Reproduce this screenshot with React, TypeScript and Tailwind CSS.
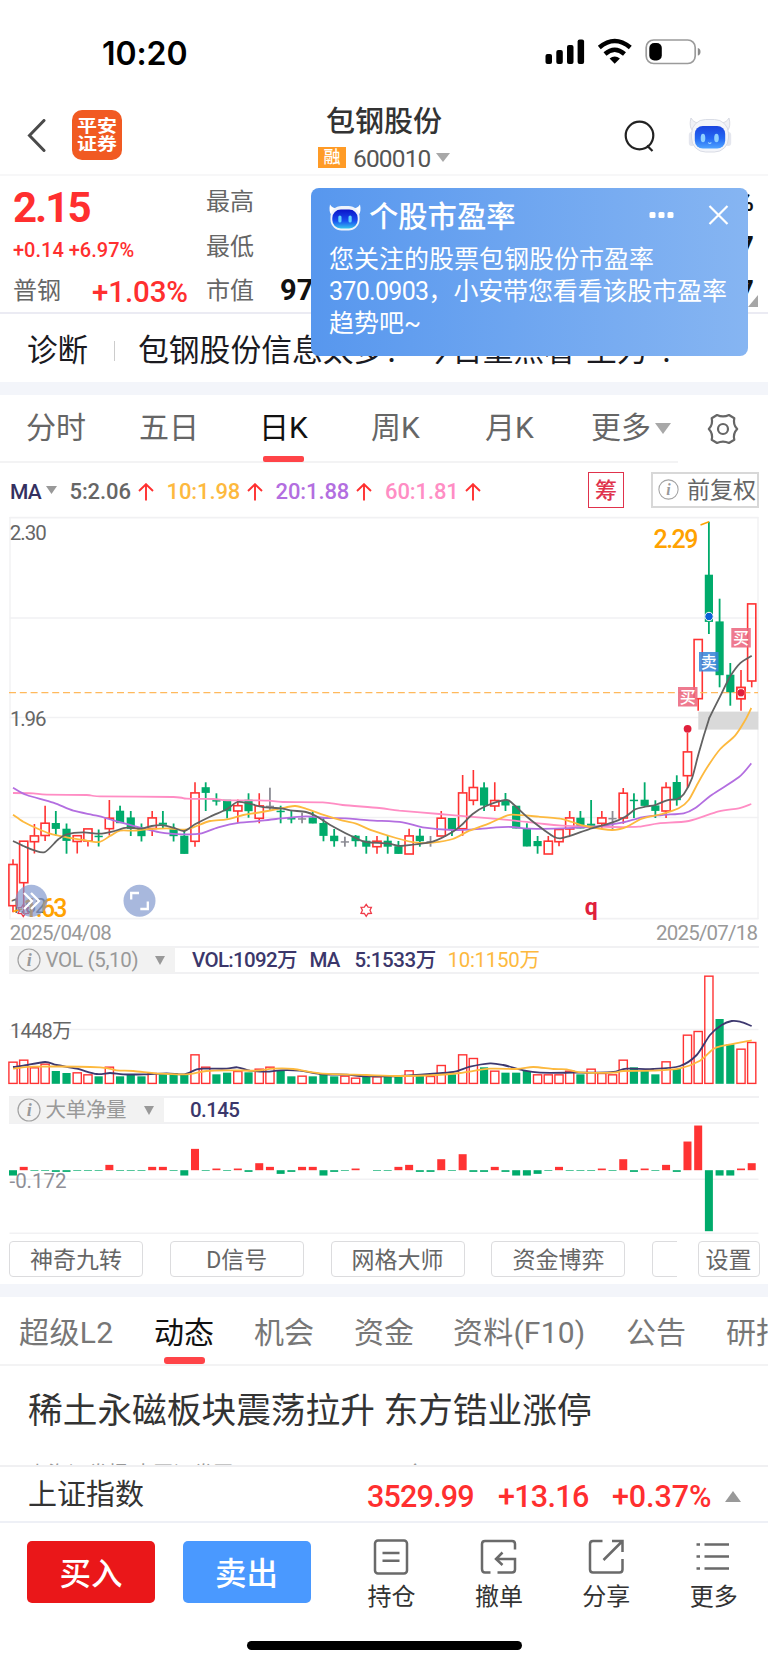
import React from "react";

type Kind = "R" | "G" | "D";
type Candle = [Kind, number, number, number, number];
type Pt = [number, number];

const X0 = 13;
const STEP = 10.706;
const cx = (i: number) => X0 + i * STEP;

const RED = "#ff3333";
const GREEN = "#00ab6b";
const GRID = "#f1f1f3";

// kind, high, body top, body bottom, low
const candles: Candle[] = [
  ["R", 859.3, 864.3, 905.7, 912.3], ["R", 841, 841, 882.7, 914], ["R", 824, 835.7, 841.7, 853.5], ["R", 805.7, 823, 835.5, 841],
  ["G", 811, 823.3, 828.7, 836], ["G", 823.5, 829, 840.7, 853.7], ["R", 835.5, 835.5, 841.5, 853.5], ["R", 828.7, 828.7, 841, 846.5],
  ["G", 829.5, 836, 837, 846.5], ["R", 800, 818, 828.7, 835.5], ["G", 805.7, 811, 823, 823], ["G", 811, 817.7, 828.7, 836],
  ["G", 823.5, 828, 836, 841.5], ["R", 811, 817.7, 828.5, 836], ["G", 811, 823, 824.6, 829], ["G", 823.5, 829.5, 836, 841.5],
  ["G", 829.5, 836, 853.7, 853.7], ["R", 782.3, 792.7, 841.3, 846.7], ["G", 782.3, 787.5, 792.7, 811], ["G", 793.3, 800.4, 801.4, 805.5],
  ["G", 800, 800, 811, 818.3], ["R", 799.5, 805.5, 811, 823], ["G", 793.3, 800, 811, 817.7], ["R", 793.3, 805.7, 818.3, 823.3],
  ["D", 787.7, 806, 807, 810.7], ["G", 805.7, 811, 812, 823.3], ["G", 810.7, 818, 819.3, 823.3], ["D", 812.7, 818.5, 819.5, 823.3],
  ["G", 811, 817.7, 823.3, 823.3], ["G", 818, 823.3, 835.7, 841.3], ["G", 829, 836, 841, 846.7], ["D", 836.7, 841.5, 842.5, 846.7],
  ["G", 835, 836, 841, 846.7], ["G", 836, 841, 846.5, 853.7], ["R", 836, 841, 846.7, 853.7], ["G", 836, 841, 846.5, 853.7],
  ["G", 841, 846.5, 853.7, 853.7], ["R", 828.7, 835.7, 854, 854], ["G", 828.7, 836, 841, 846.7], ["D", 836, 841.5, 842.5, 846.7],
  ["R", 811, 818, 836, 836], ["G", 818.3, 818.3, 829, 836], ["R", 775, 792.7, 828.7, 835.7], ["R", 770, 787.3, 800.3, 805.3],
  ["G", 782.3, 787.7, 805.3, 811], ["R", 782.3, 800.3, 806, 811], ["G", 793, 800.3, 805.3, 811], ["G", 806, 806, 828.3, 828.3],
  ["G", 823.3, 828.3, 846.3, 846.3], ["G", 836, 841.3, 846, 853.7], ["R", 836, 841, 854, 854], ["R", 828.3, 829.3, 841.7, 846.3],
  ["R", 811, 817.7, 829, 836], ["G", 811, 818, 828.3, 828.3], ["G", 800, 824, 825.7, 828.3], ["R", 811, 817.7, 823.3, 828.3],
  ["D", 811, 818.2, 819.2, 829], ["R", 788, 793, 818, 823.7], ["G", 793.3, 800, 801, 818], ["G", 782.3, 800, 805.7, 805.7],
  ["G", 800.3, 805.7, 810.7, 818], ["R", 782.3, 787.3, 811, 818], ["G", 775.3, 782.3, 800, 805.7], ["R", 733, 751.7, 775.7, 788],
  ["R", 639.3, 639.3, 698.7, 710.7], ["G", 521.7, 575, 621.7, 634], ["G", 598.7, 621.7, 675, 687.3], ["G", 663, 675, 692.3, 705.7],
  ["R", 670, 687.3, 698.7, 710.7], ["R", 603.7, 603.7, 681, 687.3],
];

// Panels of sampled points share a scale of 3 with their own origin.
const at = (ox: number, oy: number, pts: Pt[]): Pt[] => pts.map(([x, y]) => [ox + x / 3, oy + y / 3]);

const ma5: Pt[] = [
  ...at(0, 740, [[39, 303], [70, 318], [103, 331], [135, 336], [175, 298], [200, 283], [250, 277], [298, 281], [340, 274], [380, 263], [425, 266], [455, 258], [490, 256], [520, 263], [553, 273], [585, 253], [630, 230], [680, 208], [712, 186], [745, 190]]),
  ...at(256, 740, [[10, 199], [42, 203], [75, 205], [103, 211], [150, 216], [180, 228], [235, 262], [300, 295], [331, 306], [395, 310], [432, 318], [470, 314], [530, 305], [588, 277], [620, 252], [650, 222], [690, 198], [748, 180]]),
  ...at(512, 700, [[0, 309], [50, 355], [100, 393], [125, 410], [145, 415], [170, 409], [230, 388], [300, 368], [340, 350], [370, 328], [400, 320], [430, 315], [465, 301], [495, 297], [515, 283], [540, 235], [560, 160], [590, 60]]),
  ...at(620, 510, [[270, 620], [300, 560], [330, 500], [360, 460], [395, 437]]),
];
const ma10: Pt[] = [
  ...at(0, 740, [[39, 224], [70, 245], [110, 265], [150, 281], [200, 292], [250, 300], [298, 306], [330, 288], [360, 272], [400, 272], [440, 268], [500, 265], [553, 269], [580, 262], [630, 243], [680, 238], [730, 225]]),
  ...at(256, 740, [[0, 219], [50, 210], [90, 202], [118, 198], [150, 206], [200, 224], [260, 242], [300, 251], [350, 272], [420, 294], [480, 308], [530, 308], [590, 297], [640, 272], [700, 250], [740, 232]]),
  ...at(512, 700, [[0, 344], [80, 350], [145, 356], [180, 366], [220, 378], [300, 390], [345, 380], [390, 356], [450, 342], [500, 325], [530, 300], [560, 245], [590, 195], [625, 147], [670, 106], [700, 60], [718, 24]]),
];
const ma20: Pt[] = [
  ...at(0, 740, [[39, 143], [80, 165], [160, 188], [220, 212], [290, 227], [340, 241], [420, 263], [480, 277], [550, 283], [600, 281], [655, 262], [720, 248]]),
  ...at(256, 740, [[0, 244], [60, 237], [150, 229], [210, 234], [270, 235], [340, 241], [440, 247], [500, 262], [590, 270], [680, 266], [720, 262]]),
  ...at(512, 700, [[0, 381], [50, 386], [150, 385], [250, 380], [330, 368], [390, 352], [450, 345], [515, 340], [550, 324], [600, 284], [680, 232], [718, 190]]),
];
const ma60: Pt[] = [
  ...at(0, 740, [[39, 159], [100, 160], [140, 164], [260, 165], [300, 169], [520, 171], [560, 176], [640, 177], [680, 181]]),
  ...at(256, 740, [[0, 181], [40, 182], [80, 186], [200, 187], [260, 195], [370, 204], [430, 212], [550, 222], [640, 230]]),
  ...at(512, 700, [[0, 361], [80, 370], [150, 377], [300, 381], [380, 380], [440, 370], [530, 363], [620, 334], [680, 325], [718, 312]]),
];

const volume =
  "R365 R359 R382 R371 G393 G399 R397 R403 G409 R380 G409 G403 G409 R399 G403 G399 G403 R343 R380 G403 G398 R393 G397 R386 R380 G393 G409 R407 G409 G403 G409 R407 R413 G409 R409 G409 G409 R391 G403 R408 R375 G403 R343 R354 G382 R392 G398 G398 G393 R403 R403 R403 R392 G403 R386 R399 R403 R359 G382 G393 G403 R364 G387 R284 R273 R107 G237 G313 R326 R306".split(" ");

const volMa5: Pt[] = [
  ...at(0, 940, [[39, 381], [70, 377], [135, 366], [170, 375], [230, 386], [290, 402], [330, 399], [370, 403], [430, 403], [500, 400], [553, 403], [590, 388], [620, 386], [680, 386], [712, 382], [750, 392], [800, 395], [840, 391], [900, 392], [960, 402], [1040, 404], [1080, 408], [1140, 409]]),
  ...at(380, 940, [[60, 408], [150, 402], [220, 396], [270, 380], [330, 370], [370, 375], [430, 391], [480, 398], [580, 398], [640, 398], [700, 396], [740, 386], [820, 387], [900, 378], [950, 345], [990, 285], [1025, 255], [1055, 243], [1080, 245], [1115, 258]]),
];
const volMa10: Pt[] = [
  ...at(0, 940, [[39, 386], [100, 380], [300, 382], [350, 391], [400, 393], [480, 401], [560, 403], [620, 393], [700, 391], [770, 392], [820, 386], [880, 387], [960, 400], [1100, 405]]),
  ...at(380, 940, [[60, 408], [170, 405], [240, 399], [330, 386], [410, 387], [460, 381], [520, 387], [560, 388], [600, 397], [700, 398], [730, 393], [820, 392], [900, 385], [960, 362], [1000, 327], [1030, 317], [1115, 301]]),
];

const net = [
  -16, 10, -2, -2, -5, -5, -2, -2, -2, 16, -2, -2, -2, 10, 10, -2, -16, 64, -2, 5, -2, 5, -5, 21, 10, -11, -5, 10, 10, -16, -5, -2, 5, 0, -2, -2, 10, 16, -5, -5, 33, -2, 48, -5, -5, 10, -5, -16, -16, -11, -2, 10, -2, -2, -2, 5, -2, 33, -5, 5, -2, 16, -5, 86, 134, -183, -16, -16, 5, 21,
];

function smooth(p: Pt[]) {
  let d = `M${p[0][0].toFixed(1)} ${p[0][1].toFixed(1)}`;
  for (let i = 0; i < p.length - 1; i++) {
    const a = p[Math.max(0, i - 1)];
    const b = p[i];
    const c = p[i + 1];
    const e = p[Math.min(p.length - 1, i + 2)];
    const k = 7;
    d += `C${[b[0] + (c[0] - a[0]) / k, b[1] + (c[1] - a[1]) / k, c[0] - (e[0] - b[0]) / k, c[1] - (e[1] - b[1]) / k, c[0], c[1]].map((n) => n.toFixed(1)).join(" ")}`;
  }
  return d;
}

const Line = ({ pts, color }: { pts: Pt[]; color: string }) => (
  <path d={smooth(pts)} fill="none" stroke={color} strokeWidth="1.8" strokeLinejoin="round" />
);

const Grid = ({ ys }: { ys: number[] }) => (
  <>
    {ys.map((y) => (
      <path key={y} d={`M9.5 ${y}H758.5`} stroke={GRID} strokeWidth="1.6" />
    ))}
  </>
);

const Star = ({ x, y }: { x: number; y: number }) => (
  <path
    transform={`translate(${x} ${y})`}
    d="M0 -6L1.9 -3.2L5.2 -3L3.8 0L5.2 3L1.9 3.2L0 6L-1.9 3.2L-5.2 3L-3.8 0L-5.2 -3L-1.9 -3.2Z"
    fill="none"
    stroke="#f03a48"
    strokeWidth="1.3"
  />
);

const Tag = ({ x, y, color, label }: { x: number; y: number; color: string; label: string }) => (
  <g>
    <rect x={x} y={y} width="19.5" height="19.5" fill={color} fillOpacity="0.88" />
    <text x={x + 9.75} y={y + 15.6} fontSize="16" fontWeight="500" textAnchor="middle" fill="#fff">
      {label}
    </text>
  </g>
);

function PriceChart() {
  return (
    <svg className="block shrink-0" width="768" height="431" viewBox="0 515 768 431">
      <Grid ys={[517.6, 618, 717.5, 817.5, 918.6]} />
      <path d="M10 517V919M758 517V919" stroke={GRID} strokeWidth="1.4" />
      <text x="9.8" y="539.7" fontSize="20.5" fill="#666" textLength="37">2.30</text>
      <text x="10" y="726" fontSize="20.5" fill="#666" textLength="36.5">1.96</text>
      <text x="10" y="912.5" fontSize="20.5" fill="#666" textLength="36.5">1.62</text>
      <rect x="698.3" y="711.6" width="60" height="18" fill="#d9d9d9" />
      {candles.map(([k, h, t, b, l], i) => {
        const x = cx(i);
        if (k === "R")
          return (
            <g key={i} stroke={RED} strokeWidth="1.6" fill="none">
              <path d={`M${x} ${h}V${t}M${x} ${b}V${l}`} />
              <rect x={x - 4.1} y={t + 0.2} width="8.2" height={Math.max(1, b - t - 0.2)} />
            </g>
          );
        const c = k === "G" ? GREEN : "#8c8c94";
        return (
          <g key={i} fill={c}>
            <rect x={x - 0.9} y={h} width="1.8" height={l - h} />
            <rect x={x - 4.1} y={t - 0.3} width="8.2" height={b - t + 0.5} />
          </g>
        );
      })}
      <path d="M9 692.6H758" stroke="#ffb95c" strokeWidth="1.3" strokeDasharray="7 3.8" />
      <Line pts={ma60} color="#ff8dc4" />
      <Line pts={ma20} color="#b36ee0" />
      <Line pts={ma10} color="#fdb93e" />
      <Line pts={ma5} color="#626262" />
      <Tag x={678} y={687} color="#ec6880" label="买" />
      <Tag x={699} y={652} color="#3b86da" label="卖" />
      <Tag x={731.3} y={628} color="#ec6880" label="买" />
      <circle cx="709" cy="616.5" r="4.2" fill="#0a62d6" stroke="#fff" strokeWidth="1" />
      <circle cx="741" cy="692.8" r="4.2" fill="#e0203c" stroke="#fff" strokeWidth="1" />
      <rect x="736.8" y="687.5" width="8.2" height="11.2" fill="none" stroke={RED} strokeWidth="1.4" />
      <circle cx="687.6" cy="728.8" r="3.9" fill="#e0203c" />
      <path d="M700.5 525L709 521.8" stroke="#ffa200" strokeWidth="1.5" />
      <text x="653.5" y="548" fontSize="25" fontWeight="500" fill="#ffa200" textLength="45">2.29</text>
      <path d="M13 911.5L22 909" stroke="#ffa200" strokeWidth="1.5" />
      <text x="23.5" y="917.2" fontSize="25" fontWeight="500" fill="#ffa200" textLength="44">1.63</text>
      <Star x={23.3} y={910.5} />
      <Star x={366.2} y={910.3} />
      <text x="584.8" y="914.5" fontSize="23" fontWeight="700" fill="#e0203c">q</text>
      <g fill="#7b93cc" fillOpacity="0.66">
        <circle cx="31.3" cy="900.8" r="16" />
        <circle cx="139.5" cy="900.8" r="16" />
      </g>
      <g fill="none" stroke="#fff" strokeWidth="2.3">
        <path d="M24 893L32 901L24 909M31 893L39 901L31 909" />
        <path d="M131.2 899.5V893H139M140.3 909H147.8V901.5" />
      </g>
      <text x="9.8" y="940.4" fontSize="20.5" fill="#999" textLength="102">2025/04/08</text>
      <text x="656" y="940.4" fontSize="20.5" fill="#999" textLength="102">2025/07/18</text>
    </svg>
  );
}

function VolumeChart() {
  return (
    <svg className="block shrink-0" width="768" height="122" viewBox="0 974 768 122">
      <Grid ys={[1029.5]} />
      {volume.map((v, i) => {
        const x = cx(i);
        const y = 940 + Number(v.slice(1)) / 3;
        return v[0] === "R" ? (
          <rect key={i} x={x - 4.1} y={y + 0.5} width="8.2" height={1082.9 - y} fill="none" stroke={RED} strokeWidth="1.4" />
        ) : (
          <rect key={i} x={x - 4.1} y={y} width="8.2" height={1083.8 - y} fill={GREEN} />
        );
      })}
      <Line pts={volMa5} color="#3d386f" />
      <Line pts={volMa10} color="#fdb93e" />
      <text x="10" y="1038" fontSize="20" fill="#666" textLength="62">1448万</text>
    </svg>
  );
}

function NetChart() {
  return (
    <svg className="block shrink-0" width="768" height="110" viewBox="0 1124 768 110">
      <Grid ys={[1179.3, 1233.4]} />
      {net.map((v, i) => {
        const h = Math.abs(v) / 3;
        if (!h) return null;
        return <rect key={i} x={cx(i) - 4} y={v > 0 ? 1170.2 - h : 1170.2} width="8" height={h} fill={v > 0 ? RED : GREEN} />;
      })}
      <text x="9.500" y="1188" fontSize="20.5" fill="#8e8e96" textLength="57">-0.172</text>
    </svg>
  );
}

const Tri = ({ className, up }: { className: string; up?: boolean }) => (
  <svg className={`shrink-0 ${className}`} viewBox="0 0 10 10" preserveAspectRatio="none" fill="currentColor">
    <path d={up ? "M0 10H10L5 0Z" : "M0 0H10L5 10Z"} />
  </svg>
);

const Arrow = () => (
  <svg className="mt-[4px] shrink-0" width="16" height="18" viewBox="0 0 16 18" fill="none" stroke="#ff3030" strokeWidth="1.9">
    <path d="M8 17.5V1.5M1 8L8 1.2L15 8" />
  </svg>
);

const Info = ({ className }: { className: string }) => (
  <svg className={`shrink-0 ${className}`} viewBox="0 0 24 24">
    <circle cx="12" cy="12" r="11" fill="none" stroke="#a3a3a3" strokeWidth="1.2" />
    <text x="12" y="18" textAnchor="middle" fontSize="18" fontStyle="italic" fontWeight="700" fill="#999" fontFamily="Liberation Serif, serif">i</text>
  </svg>
);

const Robot = ({ className }: { className: string }) => (
  <svg className={`shrink-0 ${className}`} viewBox="0 0 44 36">
    <defs>
      <linearGradient id="robotHead" x1="0" y1="0" x2="0" y2="1">
        <stop offset="0" stopColor="#1b45e0" />
        <stop offset="0.55" stopColor="#2468f2" />
        <stop offset="1" stopColor="#4fa3ff" />
      </linearGradient>
    </defs>
    <rect x="0.8" y="15" width="6" height="14" rx="3" fill="#e4e6ee" />
    <rect x="37.2" y="15" width="6" height="14" rx="3" fill="#e4e6ee" />
    <path d="M3 1C1.6 6 2 11 4.5 13.5L10 6C7 5.5 4.5 3.8 3 1ZM41 1C42.4 6 42 11 39.5 13.5L34 6C37 5.5 39.5 3.8 41 1Z" fill="#eff0f5" stroke="#cfd2dc" strokeWidth="0.8" />
    <rect x="3.5" y="2.5" width="37" height="32.5" rx="14" fill="#f4f5f9" stroke="#d5d8e2" strokeWidth="0.9" />
    <rect x="6.8" y="9" width="30.4" height="22.5" rx="8" fill="url(#robotHead)" />
    <ellipse cx="15" cy="21" rx="2.3" ry="4.3" fill="#8fd0ff" />
    <ellipse cx="28.5" cy="21" rx="2.3" ry="4.3" fill="#8fd0ff" />
    <path d="M20.3 25.5Q21.8 27.5 23.3 25.5" fill="none" stroke="#a8dcff" strokeWidth="1.2" />
  </svg>
);

const RobotSmall = ({ className }: { className: string }) => (
  <svg className={`shrink-0 ${className}`} viewBox="0 0 32 27">
    <defs>
      <linearGradient id="robotFace" x1="0" y1="0" x2="0" y2="1">
        <stop offset="0" stopColor="#0a14c8" />
        <stop offset="0.6" stopColor="#1a4ff0" />
        <stop offset="1" stopColor="#35c3ee" />
      </linearGradient>
    </defs>
    <path d="M1 0.5C0 5 0.5 9 2.5 11L9 4.5C5 4.5 2.5 3 1 0.5ZM31 0.5C32 5 31.5 9 29.5 11L23 4.5C27 4.5 29.500 3 31 0.5Z" fill="#fff" />
    <rect x="1.5" y="2" width="29" height="24.5" rx="11" fill="#eef3fb" />
    <rect x="3.3" y="5.5" width="25.4" height="19" rx="8.5" fill="url(#robotFace)" />
    <rect x="9.3" y="11.5" width="3.2" height="7" rx="1.6" fill="#5fd2ff" />
    <rect x="19.5" y="11.5" width="3.2" height="7" rx="1.6" fill="#5fd2ff" />
  </svg>
);

function StatusBar() {
  return (
    <div className="flex h-[94px] shrink-0 items-start">
      <div className="mt-[34px] ml-[102px] w-[443px] font-['Inter'] text-[32px] leading-10 font-semibold tracking-[-0.1px] text-black">10:20</div>
      <svg className="mt-[38px]" width="158" height="28" viewBox="0 0 158 28">
        <g fill="#000">
          <rect x="0.5" y="16" width="6.5" height="10" rx="2" />
          <rect x="11.3" y="12" width="6.5" height="14" rx="2" />
          <rect x="22" y="7" width="6.5" height="19" rx="2" />
          <rect x="32.6" y="1.5" width="6.5" height="24.5" rx="2" />
        </g>
        <g fill="none" stroke="#000" strokeWidth="4.5">
          <path d="M54.3 9.5Q69.7 -3.5 85.3 9.5" />
          <path d="M60 16Q69.7 7.5 79.5 16" />
        </g>
        <path d="M64.6 20.5Q69.7 16.5 74.9 20.5L69.7 25.8Z" fill="#000" />
        <rect x="101.2" y="2" width="49" height="23.5" rx="7.5" fill="none" stroke="#9b9b9b" strokeWidth="1.7" />
        <path d="M152.8 10Q155.5 10.5 155.5 13.8T152.800 17.600Z" fill="#8a8a8a" />
        <rect x="104.3" y="5" width="12.5" height="17.5" rx="5" fill="#000" />
      </svg>
    </div>
  );
}

function Header() {
  return (
    <div className="flex h-[82px] shrink-0 items-start border-b-2 border-[#f7f7f8]">
      <svg className="mt-[25px] ml-[26px] shrink-0" width="20" height="33" viewBox="0 0 20 33" fill="none" stroke="#4a4a4a" strokeWidth="3">
        <path d="M18 1.5L3.5 16.5L18 31.5" strokeLinecap="round" />
      </svg>
      <div className="mt-4 ml-[26px] flex h-[50px] w-[50px] shrink-0 items-center justify-center rounded-[10px] bg-[#f15a22] text-[20px] leading-[20px] font-bold text-white">
        <div className="flex scale-y-[0.86] flex-col">
          <span>平安</span>
          <span>证券</span>
        </div>
      </div>
      <div className="ml-[162px] flex w-[200px] shrink-0 flex-col items-center pt-[11px]">
        <div className="h-[35px] text-[29px] leading-[35px] font-medium text-[#333]">包钢股份</div>
        <div className="mt-[3px] flex h-[28px] items-center">
          <span className="flex h-[21px] w-[28px] items-center justify-center bg-[#ff9b26] text-[17px] leading-none font-medium text-white">融</span>
          <span className="mt-[3px] ml-[7px] w-[78px] text-[24.5px] leading-[26px] tracking-[-0.85px] text-[#555]">600010</span>
          <Tri className="ml-[5px] h-[9px] w-[14px] text-[#a8a8a8]" />
        </div>
      </div>
      <svg className="mt-[26px] ml-[139px] shrink-0" width="32" height="34" viewBox="0 0 32 34" fill="none" stroke="#222" strokeWidth="2.2">
        <circle cx="16.5" cy="15.5" r="13.8" />
        <path d="M24 25.5L29.5 31" />
      </svg>
      <Robot className="mt-[23px] ml-[33px] h-[36px] w-[44px]" />
    </div>
  );
}

function Quote() {
  return (
    <div className="flex h-[138px] shrink-0 border-b-2 border-[#ebebf3]">
      <div className="w-[193px] shrink-0 pl-[13px] text-[#ff2f2f]">
        <div className="mt-[10px] h-[44px] text-[42px] leading-[44px] font-bold tracking-[-2px]">2.15</div>
        <div className="mt-[7px] h-[27px] text-[20px] leading-[27px] font-medium whitespace-nowrap">+0.14 +6.97%</div>
        <div className="mt-[10px] flex h-[34px] items-center">
          <span className="w-[79px] text-[24px] text-[#666]">普钢</span>
          <span className="mt-[2px] text-[29.500px] font-medium tracking-[-0.1px]">+1.03%</span>
        </div>
      </div>
      <div className="ml-[13px] flex w-[74px] shrink-0 flex-col pt-[4px] text-[24px] leading-[44.500px] text-[#666]">
        <span className="h-[44.500px]">最高</span>
        <span className="h-[44.500px]">最低</span>
        <span className="h-[44.500px]">市值</span>
      </div>
      <div className="flex grow items-start justify-between text-[29px] leading-[44.500px] font-bold text-[#111]">
        <span className="mt-[92px]">97</span>
        <div className="mt-[4px] flex w-[40px] flex-col items-end pr-[14px]">
          <span className="h-[44.500px] text-[26px]">%</span>
          <span className="h-[44.500px]">7</span>
          <span className="h-[44.500px]">7</span>
        </div>
      </div>
      <svg className="mt-[119px] -ml-[20px] shrink-0" width="20" height="12" viewBox="0 0 20 12">
        <path d="M10 0V12H0Z" fill="#a6a6a6" />
      </svg>
    </div>
  );
}

function Diagnosis() {
  return (
    <div className="flex h-[68px] shrink-0 items-center overflow-hidden pt-[5px] pl-[27px] text-[30.800px] leading-[44px] text-[#1a1a1f]">
      <span className="w-[87px] shrink-0 text-[30.500px]">诊断</span>
      <span className="h-[20px] w-px shrink-0 bg-[#ccc]" />
      <span className="ml-[23px] whitespace-nowrap">包钢股份信息太多？<span className="ml-[6px]">今日重点看“主力”！</span></span>
    </div>
  );
}

function Popup() {
  return (
    <div className="absolute top-[188px] left-[311px] h-[168px] w-[437px] rounded-[8px] bg-gradient-to-r from-[#5797ee] to-[#86b5f2] pt-[8px] pl-[18px] text-white">
      <div className="flex h-[42px] items-center">
        <RobotSmall className="h-[27px] w-[32px]" />
        <span className="ml-[8px] w-[280px] text-[29.300px] leading-[42px] font-medium">个股市盈率</span>
        <svg className="-mt-[4px]" width="80" height="24" viewBox="0 0 80 24" fill="#fff">
          <rect x="0.5" y="9" width="6" height="6" rx="1.5" />
          <rect x="9.5" y="9" width="6" height="6" rx="1.5" />
          <rect x="18.5" y="9" width="6" height="6" rx="1.5" />
          <path d="M60.5 3L78.5 21M78.5 3L60.500 21" stroke="#fff" strokeWidth="2.2" />
        </svg>
      </div>
      <p className="mt-[6px] text-[25px] leading-[32px] whitespace-nowrap">
        您关注的股票包钢股份市盈率
        <br />
        <span className="tracking-[-0.7px]">370.0903</span>，<span className="tracking-[-0.15px]">小安带您看看该股市盈率</span>
        <br />
        趋势吧~
      </p>
    </div>
  );
}

function PeriodTabs() {
  return (
    <div className="flex h-[68px] shrink-0 items-start text-[30px] leading-[66px] text-[#666]">
      <div className="flex h-[68px] w-[678px] shrink-0 border-b-2 border-[#f3f3f4] whitespace-nowrap">
        <span className="ml-[26px] w-[113px]">分时</span>
        <span className="w-[120px]">五日</span>
        <span className="flex h-[67px] w-[112px] flex-col text-[#111]">
          <span className="h-[61px]">日K</span>
          <span className="ml-[3.500px] h-[6px] w-[41px] shrink-0 rounded-[2px] bg-[#ff4448]" />
        </span>
        <span className="w-[114px]">周K</span>
        <span className="w-[106px]">月K</span>
        <span className="flex items-center">
          <span>更多</span>
          <Tri className="ml-[4px] h-[11px] w-[16px] text-[#a8a8a8]" />
        </span>
      </div>
      <svg className="mt-[18px] ml-[29px]" width="32" height="32" viewBox="0 0 32 32" fill="none" stroke="#666" strokeWidth="2.2" strokeLinejoin="round">
        <path d="M10 2Q16 4.800 22 2L27.300 5.200Q25.800 11.500 30.200 16Q25.800 20.500 27.300 26.800L22 30Q16 27.200 10 30L4.700 26.800Q6.200 20.500 1.800 16Q6.200 11.500 4.700 5.200Z" />
        <circle cx="16" cy="16" r="5" />
      </svg>
    </div>
  );
}

const maText = "mt-[5px] shrink-0";

function MaRow() {
  return (
    <div className="flex h-[52px] shrink-0 items-center pt-px pl-[10px] text-[22px] leading-[30px] font-medium tracking-[-0.1px] whitespace-nowrap">
      <span className={`${maText} w-[36px] text-[21px] tracking-[-0.7px] text-[#34305f]`}>MA</span>
      <Tri className="mt-px h-[8px] w-[11px] text-[#999]" />
      <span className={`${maText} ml-[12.500px] w-[68px] text-[#666]`}>5:2.06</span>
      <Arrow />
      <span className={`${maText} ml-[13px] w-[80px] text-[#fdb93e]`}>10:1.98</span>
      <Arrow />
      <span className={`${maText} ml-[13px] w-[80px] text-[#b36ee0]`}>20:1.88</span>
      <Arrow />
      <span className={`${maText} ml-[13.500px] w-[80px] text-[#ff8dc4]`}>60:1.81</span>
      <Arrow />
      <span className="ml-[107px] flex h-[36px] w-[36px] items-center justify-center border-[1.500px] border-[#e0324c] pt-[3px] text-[22px] text-[#e0324c]">筹</span>
      <span className="ml-[27px] flex h-[36px] w-[108px] items-center border-2 border-[#d8d8d8] font-normal tracking-normal text-[#666]">
        <Info className="ml-[5px] h-[21px] w-[21px]" />
        <span className="mt-[3px] ml-[8px] text-[23px]">前复权</span>
      </span>
    </div>
  );
}

function PanelHead({ wide, label, children }: { wide: boolean; label: string; children: React.ReactNode }) {
  return (
    <div className="mx-[9px] flex h-[28px] shrink-0 items-center border-y-2 border-[#f1f1f3] text-[20.500px] leading-[24px] tracking-[-0.3px] whitespace-nowrap">
      <div className={`flex h-[26px] shrink-0 items-center bg-[#f2f2f2] pl-[8px] text-[#999] ${wide ? "w-[166px]" : "w-[155px]"}`}>
        <Info className="h-[24px] w-[24px]" />
        <span className={`ml-[4.500px] ${wide ? "w-[109px] text-[20.500px]" : "w-[98px] text-[20.500px]"}`}>{label}</span>
        <Tri className="h-[9px] w-[10px]" />
      </div>
      {children}
    </div>
  );
}

const chip = "flex h-[36px] shrink-0 items-center justify-center rounded-[4px] border-[1.500px] border-[#dcdcde] pt-[4px]";

function Indicators() {
  return (
    <div className="flex h-[50px] shrink-0 items-start pt-[7px] pl-[9px] text-[23px] leading-[30px] text-[#666]">
      <div className="flex w-[668px] shrink-0 gap-[26.800px] overflow-hidden whitespace-nowrap">
        <span className={`${chip} w-[134px]`}>神奇九转</span>
        <span className={`${chip} w-[134px]`}>D信号</span>
        <span className={`${chip} w-[134px]`}>网格大师</span>
        <span className={`${chip} w-[134px]`}>资金博弈</span>
        <span className={`${chip} w-[134px]`} />
      </div>
      <span className={`${chip} ml-[20.500px] w-[62px]`}>设置</span>
    </div>
  );
}

function InfoTabs() {
  return (
    <div className="flex h-[69px] shrink-0 overflow-hidden border-b-2 border-[#f3f3f4] pl-[19px] text-[30px] leading-[72px] whitespace-nowrap text-[#777]">
      <span className="w-[135px] shrink-0 tracking-[0.4px]">超级L2</span>
      <span className="flex w-[100px] shrink-0 flex-col text-[#111]">
        <span className="h-[60px]">动态</span>
        <span className="ml-[10px] h-[7px] w-[41px] shrink-0 rounded-[3px] bg-[#ff4448]" />
      </span>
      <span className="w-[100px] shrink-0">机会</span>
      <span className="w-[99px] shrink-0">资金</span>
      <span className="w-[173px] shrink-0 tracking-[0.2px]">资料(F10)</span>
      <span className="w-[100px] shrink-0">公告</span>
      <span className="shrink-0">研报</span>
    </div>
  );
}

const actionIcons: { label: string; icon: React.ReactNode }[] = [
  {
    label: "持仓",
    icon: (
      <>
        <rect x="2" y="1.5" width="32" height="33" rx="3" />
        <path d="M9.5 14H26.5M9.5 21.8H26.5" />
      </>
    ),
  },
  {
    label: "撤单",
    icon: <path d="M35 10.5V5Q35 2 32 2H5Q2 2 2 5V30Q2 33.5 5 33.5H10.5M17.5 33.5H32Q35 33.5 35 30.5V20H16.5M22.5 13.5L16 20L22.5 26" />,
  },
  {
    label: "分享",
    icon: <path d="M14.5 2H5Q2 2 2 5V30.5Q2 33.5 5 33.5H31.5Q34.5 33.5 34.5 30.5V20M24 2H34.5V13M34.5 2L15.500 21" />,
  },
  {
    label: "更多",
    icon: <path d="M9.5 5.500H34M9.5 17.500H34M9.5 29.500H34M1.500 5.500H5M1.500 17.500H5M1.500 29.500H5" />,
  },
];

function ActionBar() {
  return (
    <div className="flex h-[142px] shrink-0 flex-col">
      <div className="flex h-[118px] items-start pl-[27px]">
        <button className="mt-[18px] flex h-[62px] w-[128px] shrink-0 items-center justify-center rounded-[5px] bg-[#ea1719] pt-[6px] text-[31.500px] leading-[40px] font-medium text-white">买入</button>
        <button className="mt-[18px] ml-[27.500px] flex h-[62px] w-[128px] shrink-0 items-center justify-center rounded-[5px] bg-[#4a99ff] pt-[6px] text-[31.500px] leading-[40px] font-medium text-white">卖出</button>
        <div className="mt-[16px] ml-[49px] flex gap-[43.400px]">
          {actionIcons.map((a) => (
            <div key={a.label} className="flex w-[64px] flex-col items-center text-[24px] leading-[32px] text-[#333]">
              <svg width="37" height="36" viewBox="0 0 37 36" fill="none" stroke="#6a6a6a" strokeWidth="2.5">
                {a.icon}
              </svg>
              <span className="mt-[6px]">{a.label}</span>
            </div>
          ))}
        </div>
      </div>
      <div className="mx-auto h-[9px] w-[275px] rounded-full bg-black" />
    </div>
  );
}

const indexText = "mt-[1px] text-[30.500px] font-medium text-[#ff2f2f]";

export default function App() {
  return (
    <div className="relative flex h-[1665px] w-[768px] flex-col overflow-hidden bg-white font-['Roboto','Noto_Sans_CJK_SC',sans-serif]">
      <StatusBar />
      <Header />
      <Quote />
      <Diagnosis />
      <div className="h-[13px] shrink-0 bg-[#f3f5fa]" />
      <PeriodTabs />
      <MaRow />
      <PriceChart />
      <PanelHead wide label="VOL (5,10)">
        <span className="ml-[17px] w-[117.500px] font-medium tracking-[-0.65px] text-[#3b376b]">VOL:1092万</span>
        <span className="w-[45px] font-medium tracking-[-0.8px] text-[#3b376b]">MA</span>
        <span className="w-[93px] font-medium tracking-[-0.4px] text-[#3b376b]">5:1533万</span>
        <span className="font-normal text-[#fdb93e]">10:1150万</span>
      </PanelHead>
      <VolumeChart />
      <PanelHead wide={false} label="大单净量">
        <span className="ml-[26px] text-[20.500px] font-medium tracking-[-0.6px] text-[#3b376b]">0.145</span>
      </PanelHead>
      <NetChart />
      <Indicators />
      <div className="h-[13px] shrink-0 bg-[#f3f5fa]" />
      <InfoTabs />
      <div className="flex h-[101px] shrink-0 flex-col overflow-hidden border-b-2 border-[#f0f0f2] pl-[28px] whitespace-nowrap">
        <div className="h-[96px] shrink-0 text-[34.700px] leading-[91px] text-[#333]">稀土永磁板块震荡拉升 东方锆业涨停</div>
        <div className="flex text-[20px] leading-[24px] text-[#999]">
          <span className="w-[377px]">上海证券报·中国证券网</span>
          <span>今天</span>
        </div>
      </div>
      <div className="flex h-[56px] shrink-0 items-center border-b-2 border-[#eef0f6] pt-[4px] pl-[28px] whitespace-nowrap">
        <span className="w-[339px] text-[29px] text-[#333]">上证指数</span>
        <span className={`${indexText} w-[131px] tracking-[-0.8px]`}>3529.99</span>
        <span className={`${indexText} w-[114px] tracking-[-0.7px]`}>+13.16</span>
        <span className={`${indexText} w-[113px] tracking-[-0.1px]`}>+0.37%</span>
        <Tri up className="h-[11px] w-[16px] text-[#999]" />
      </div>
      <ActionBar />
      <Popup />
    </div>
  );
}
